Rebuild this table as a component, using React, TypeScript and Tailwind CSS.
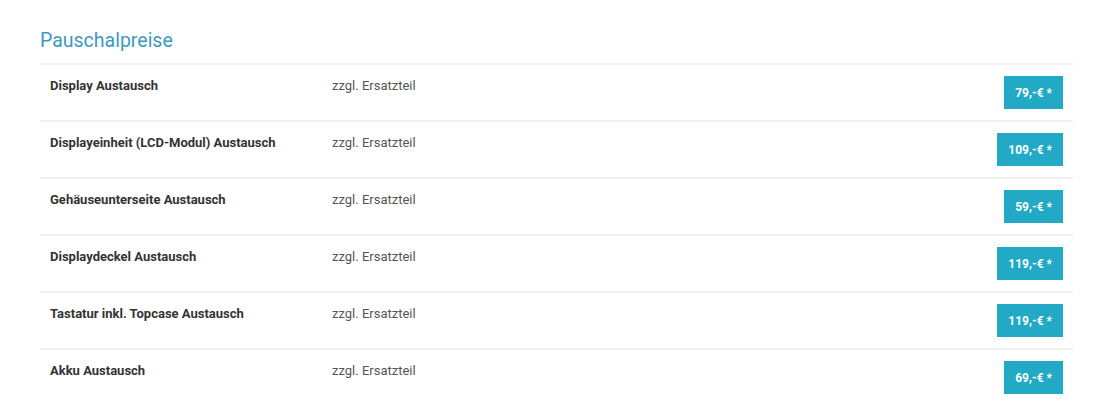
import React from "react";

const rows = [
  { name: "Display Austausch", price: "79,-€ *" },
  { name: "Displayeinheit (LCD-Modul) Austausch", price: "109,-€ *" },
  { name: "Gehäuseunterseite Austausch", price: "59,-€ *" },
  { name: "Displaydeckel Austausch", price: "119,-€ *" },
  { name: "Tastatur inkl. Topcase Austausch", price: "119,-€ *" },
  { name: "Akku Austausch", price: "69,-€ *" },
];

export default function App() {
  return (
    <div className="w-[1100px] h-[404px] bg-white overflow-hidden font-['Roboto',sans-serif]">
      <div className="pl-[40px] pr-[27px] pt-[29px]">
        <h2 className="text-[19.5px] leading-[24px] text-[#3f98bf] mb-[10px]">Pauschalpreise</h2>
        <div className="border-t-2 border-[#efefef]">
          {rows.map((row) => (
            <div
              key={row.name}
              className="flex items-start h-[57px] pt-[11px] pl-[10px] pr-[10px] border-b-2 border-[#efefef]"
            >
              <div className="w-[282px] text-[13px] leading-[20px] font-bold text-[#333]">{row.name}</div>
              <div className="flex-1 text-[13px] leading-[20px] text-[#555]">zzgl. Ersatzteil</div>
              <div className="h-[33px] px-[11px] flex items-center bg-[#22a9c6] text-white text-[12px] font-bold">
                {row.price}
              </div>
            </div>
          ))}
        </div>
      </div>
    </div>
  );
}
